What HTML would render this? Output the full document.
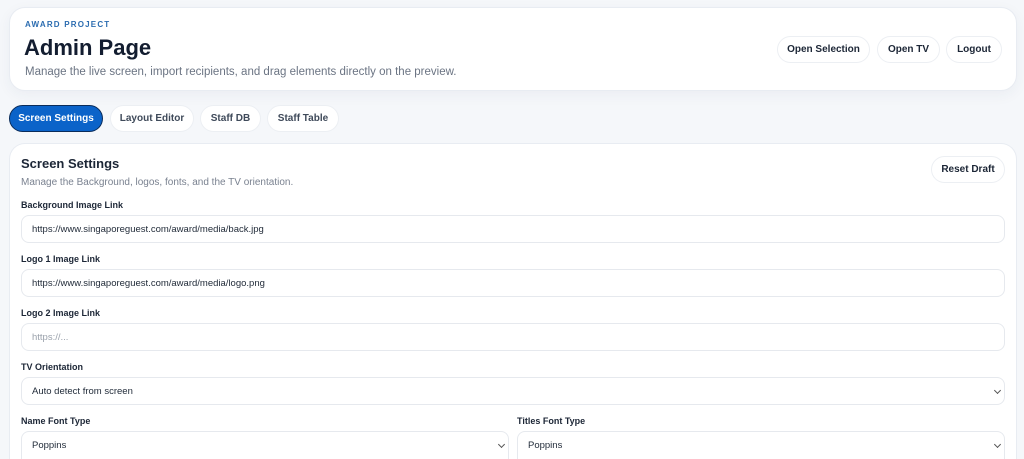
<!DOCTYPE html>
<html><head><style>
*{box-sizing:border-box;margin:0;padding:0}
html,body{width:1024px;height:459px;overflow:hidden}
body{background:#f5f7fa;font-family:"Liberation Sans",sans-serif;position:relative;color:#152238}
.card{position:absolute;background:#fff;border:1px solid #e8ecf2;border-radius:16px;box-shadow:0 4px 14px rgba(30,50,90,.05)}
.a{position:absolute;white-space:nowrap}
.btn{position:absolute;height:27px;border:1px solid #eceff3;border-radius:14px;background:#fff;font-size:10px;font-weight:bold;color:#1c2636;display:flex;align-items:center;justify-content:center}
.lbl{position:absolute;left:21px;font-size:9px;font-weight:bold;color:#1c2636}
.in{position:absolute;height:28px;border:1px solid #e6e9ee;border-radius:8px;background:#fff;font-size:9.5px;color:#1f2937;padding-left:10px;display:flex;align-items:center}
.chev{position:absolute;right:4px;top:10px;width:5px;height:5px;border-right:1.2px solid #555;border-bottom:1.2px solid #555;transform:rotate(45deg)}
</style></head><body>
<div class="card" style="left:9px;top:7px;width:1008px;height:84px"></div>
<div class="a" style="left:25px;top:20px;font-size:8px;font-weight:bold;letter-spacing:1.2px;color:#2b6cb0">AWARD PROJECT</div>
<div class="a" style="left:24px;top:35px;font-size:22px;font-weight:bold;color:#131d30">Admin Page</div>
<div class="a" style="left:25px;top:66px;font-size:11.5px;color:#6b7483">Manage the live screen, import recipients, and drag elements directly on the preview.</div>
<div class="btn" style="left:777px;top:36px;width:93px">Open Selection</div>
<div class="btn" style="left:877px;top:36px;width:63px">Open TV</div>
<div class="btn" style="left:946px;top:36px;width:56px">Logout</div>

<div class="btn" style="left:9px;top:105px;width:94px;background:#0b63c9;border:1.5px solid #0a2c5a;color:#fff">Screen Settings</div>
<div class="btn" style="left:110px;top:105px;width:84px;color:#3f4a5a">Layout Editor</div>
<div class="btn" style="left:200px;top:105px;width:61px;color:#3f4a5a">Staff DB</div>
<div class="btn" style="left:267px;top:105px;width:72px;color:#3f4a5a">Staff Table</div>

<div class="card" style="left:9px;top:143px;width:1008px;height:316px;border-bottom:none;border-radius:16px 16px 0 0;box-shadow:none"></div>
<div class="a" style="left:21px;top:156px;font-size:13px;font-weight:bold;color:#1c2636">Screen Settings</div>
<div class="a" style="left:21px;top:177px;font-size:10px;color:#7a8290">Manage the Background, logos, fonts, and the TV orientation.</div>
<div class="btn" style="left:931px;top:156px;width:74px">Reset Draft</div>

<div class="lbl" style="top:200px">Background Image Link</div>
<div class="in" style="left:21px;top:215px;width:984px">https://www.singaporeguest.com/award/media/back.jpg</div>
<div class="lbl" style="top:254px">Logo 1 Image Link</div>
<div class="in" style="left:21px;top:269px;width:984px">https://www.singaporeguest.com/award/media/logo.png</div>
<div class="lbl" style="top:308px">Logo 2 Image Link</div>
<div class="in" style="left:21px;top:323px;width:984px;color:#9aa1ab">https://...</div>
<div class="lbl" style="top:362px">TV Orientation</div>
<div class="in" style="left:21px;top:377px;width:984px">Auto detect from screen<span class="chev"></span></div>
<div class="lbl" style="top:416px">Name Font Type</div>
<div class="in" style="left:21px;top:431px;width:488px;height:28px;border-bottom:none;border-radius:8px 8px 0 0">Poppins<span class="chev"></span></div>
<div class="lbl" style="top:416px;left:517px">Titles Font Type</div>
<div class="in" style="left:517px;top:431px;width:488px;height:28px;border-bottom:none;border-radius:8px 8px 0 0">Poppins<span class="chev"></span></div>
</body></html>
